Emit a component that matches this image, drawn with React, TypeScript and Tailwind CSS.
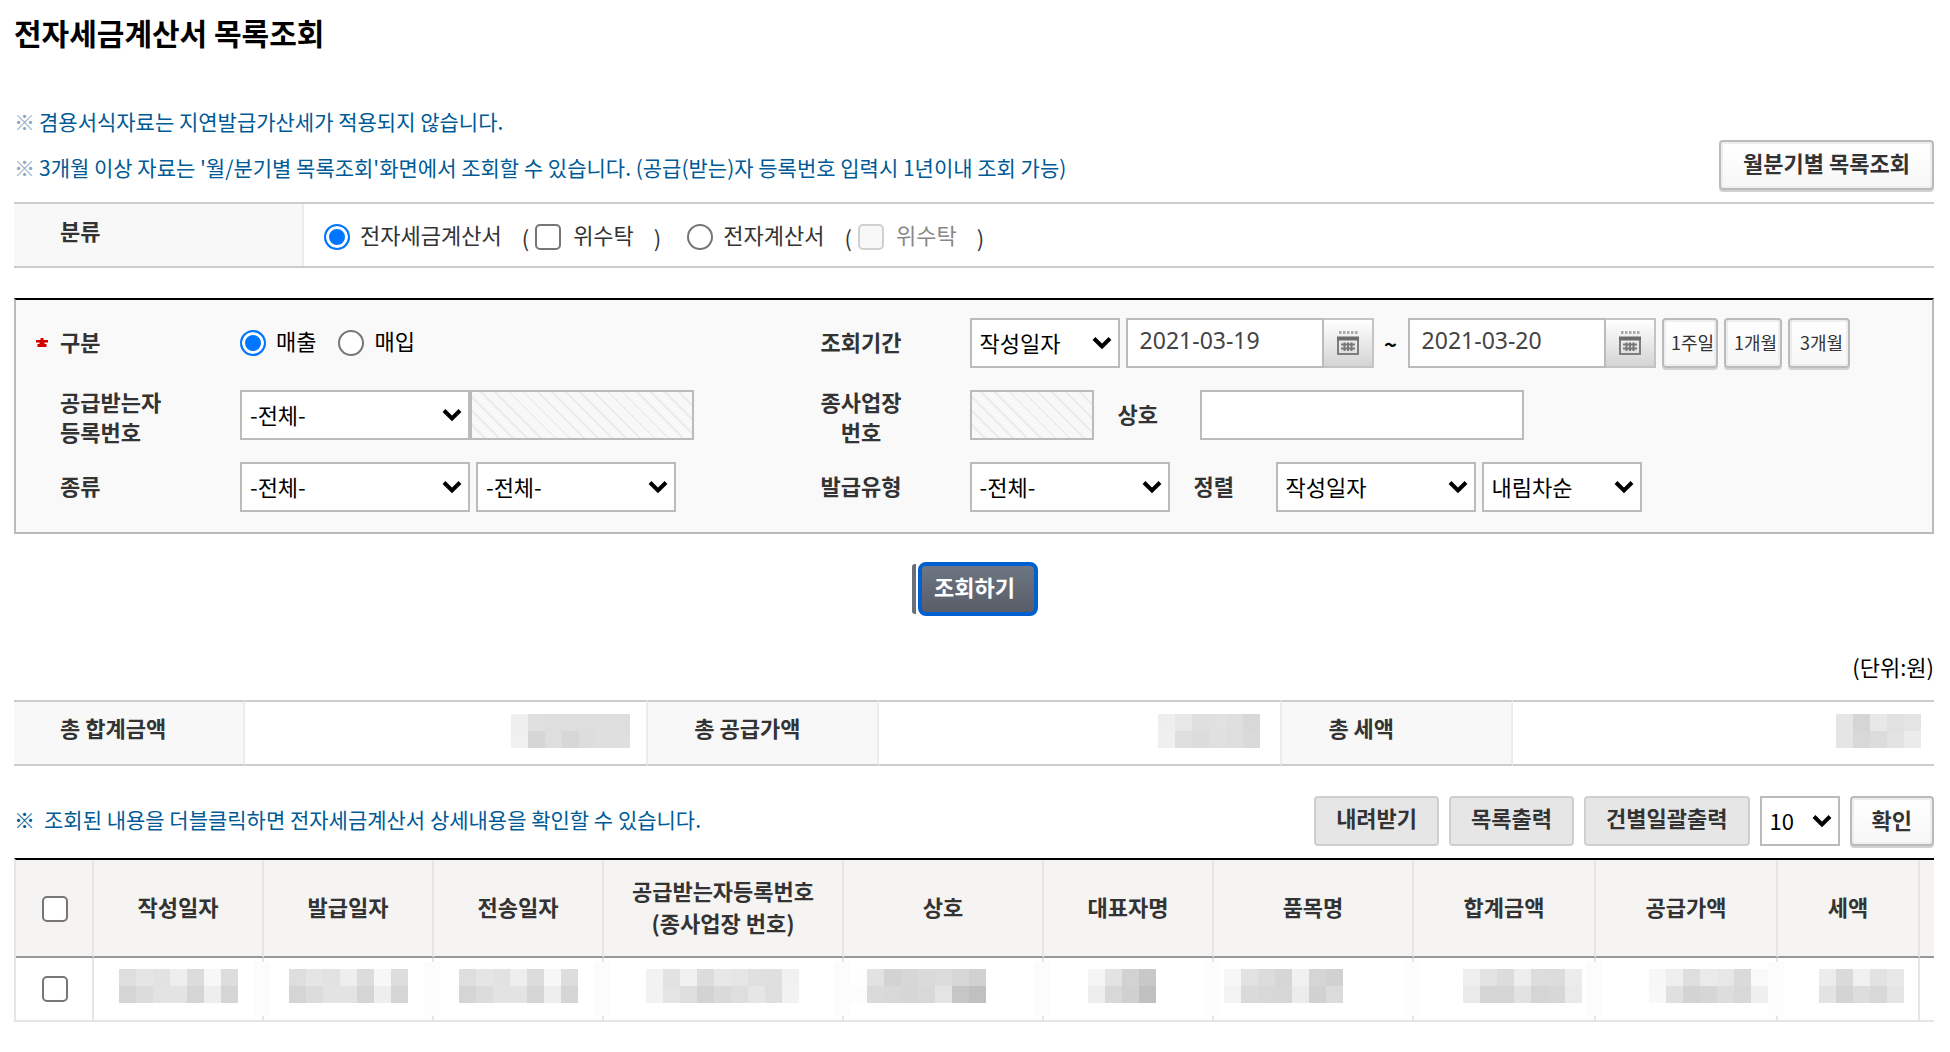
import { useId, type ReactNode } from "react";
import clsx from "clsx";

const RADIO =
  "size-[26px] shrink-0 appearance-none rounded-full border-2 border-[#767676] bg-white checked:border-[#0075ff] checked:bg-[#0075ff] checked:shadow-[inset_0_0_0_3px_#fff]";
const CHECK =
  "size-[26px] shrink-0 appearance-none rounded-[5px] border-2 border-[#767676] bg-white align-middle checked:bg-[#0075ff] disabled:border-[#d0d0d0] disabled:bg-[#f8f8f8]";
const FIELD = "h-[50px] border-2 border-[#bbb] bg-white";
const DISABLED_FIELD =
  "h-[50px] border-2 border-[#bbb] bg-[repeating-linear-gradient(45deg,#f8f8f8_0px,#f8f8f8_8px,#ececec_8px,#ececec_10px)]";
const WHITE_BUTTON =
  "h-[50px] rounded-[4px] border-2 border-[#bbb] bg-linear-to-b from-white to-[#f7f7f7] text-[#333] shadow-[inset_0_0_0_2px_#eee,0_2px_0_#d2d2d2]";
const GRAY_BUTTON =
  "h-[50px] rounded-[4px] border-2 border-[#cfcfcf] bg-[#e6e6e6] px-5 pb-2 font-bold text-[#333]";
const FORM_LABEL = "pb-1 font-bold";

function Select({ label, options, className }: { label: string; options: string[]; className: string }) {
  return (
    <div className={clsx("relative shrink-0", className)}>
      <select
        aria-label={label}
        className="h-[50px] w-full appearance-none border-2 border-[#bbb] bg-white pb-[3px] pl-2 text-black"
      >
        {options.map((o) => (
          <option key={o}>{o}</option>
        ))}
      </select>
      <svg
        viewBox="0 0 20 14"
        className="pointer-events-none absolute top-[18px] right-2 h-[14px] w-5"
        fill="none"
        stroke="#000"
        strokeWidth="4"
      >
        <path d="M2 2.5 10 10.5 18 2.5" />
      </svg>
    </div>
  );
}

function DateField({ label, value }: { label: string; value: string }) {
  return (
    <div className="flex shrink-0">
      <input
        aria-label={label}
        defaultValue={value}
        className={clsx(FIELD, "w-[198px] pb-[6px] pl-3 font-['Noto_Sans'] text-[23px] text-[#444]")}
      />
      <button
        type="button"
        aria-label={label + " 달력"}
        className="flex h-[50px] w-[50px] items-center justify-center border-2 border-l-0 border-[#c4c4c4] bg-linear-to-b from-white to-[#d4d4d4]"
      >
        <svg viewBox="0 0 24 24" className="size-6" fill="none">
          <path d="M3 1.5H22" stroke="#aaa" strokeWidth="3" strokeDasharray="2.5 1.5" />
          <rect x="2" y="7" width="20" height="16" stroke="#7d7d7d" strokeWidth="2" />
          <path d="M1 7.5H23" stroke="#6c6c6c" strokeWidth="4" />
          <path d="M5 13.5H19M5 17.5H19M8.5 11.5V20M12 11.5V20M15.5 11.5V20" stroke="#777" strokeWidth="2" />
        </svg>
      </button>
    </div>
  );
}

function Choice({
  type,
  name,
  children,
  checked,
  disabled,
}: {
  type: "radio" | "checkbox";
  name?: string;
  children: ReactNode;
  checked?: boolean;
  disabled?: boolean;
}) {
  const id = useId();
  return (
    <span className={clsx("flex items-center", type === "radio" ? "gap-[10px]" : "gap-3")}>
      <input
        id={id}
        type={type}
        name={name}
        defaultChecked={checked}
        disabled={disabled}
        className={type === "radio" ? RADIO : CHECK}
      />
      <label htmlFor={id} className={clsx("pb-[7px]", disabled && "text-[#888]")}>
        {children}
      </label>
    </span>
  );
}

/* Masked values: one two-digit gray level per tile, two rows of tiles. */
function Mask({ rows }: { rows: string[] }) {
  return (
    <span className="inline-block align-middle" role="img" aria-label="비공개">
      {rows.map((row, r) => (
        <span key={r} className="flex h-[17px]">
          {row.split(" ").map((g, i) => (
            <span key={i} className="size-[17px]" style={{ backgroundColor: "#" + g + g + g }} />
          ))}
        </span>
      ))}
    </span>
  );
}

const DATE_MASK = ["de e5 e2 ee dc f7 dd", "d5 dc e3 e3 d5 ee d5"];

const COLUMNS: { title: ReactNode; width: string; pad: string; mask: string[] }[] = [
  { title: "작성일자", width: "w-[170px]", pad: "text-center", mask: DATE_MASK },
  { title: "발급일자", width: "w-[170px]", pad: "text-center", mask: DATE_MASK },
  { title: "전송일자", width: "w-[170px]", pad: "text-center", mask: DATE_MASK },
  {
    title: (
      <>
        공급받는자등록번호
        <br />
        (종사업장 번호)
      </>
    ),
    width: "w-[240px]",
    pad: "pr-[2px] text-center",
    mask: ["f2 e2 f1 dc e8 e6 e0 df f1", "f2 e4 de d3 da de e6 de f2"],
  },
  {
    title: "상호",
    width: "w-[200px]",
    pad: "pl-[6px] text-left",
    mask: ["fe e2 d3 d7 da dc d7 d1", "fc da d8 d6 d8 e4 c6 c0"],
  },
  { title: "대표자명", width: "w-[170px]", pad: "pr-3 text-center", mask: ["f5 e3 d2 c8", "ee d8 d0 c0"] },
  {
    title: "품목명",
    width: "w-[200px]",
    pad: "pl-[10px] text-left",
    mask: ["f7 e2 dc d6 f1 d5 d1", "f3 da d8 d7 ec d1 db"],
  },
  {
    title: "합계금액",
    width: "w-[182px]",
    pad: "pr-3 text-right",
    mask: ["ef e3 dc ee dd dc ec", "ea d5 d5 e2 d5 d7 ea"],
  },
  {
    title: "공급가액",
    width: "w-[182px]",
    pad: "pr-2 text-right",
    mask: ["f7 ef de ea e7 da f9", "f8 e0 d3 d6 dd d8 ef"],
  },
  {
    title: "세액",
    width: "w-[142px]",
    pad: "pr-[14px] text-right",
    mask: ["ec da f0 e2 e8", "e3 d4 dd d8 e5"],
  },
];

const TOTALS = [
  {
    title: "총 합계금액",
    cell: "w-[21%] border-r-2 border-r-[#ebebeb] pr-4",
    mask: ["ef e0 de de de de de", "f0 d6 de d7 dd df df"],
  },
  {
    title: "총 공급가액",
    cell: "w-[21%] border-r-2 border-r-[#ebebeb] pr-5",
    mask: ["ee e7 df e1 df d8", "ef de dc e0 de da"],
  },
  { title: "총 세액", cell: "pr-[13px]", mask: ["e5 d5 e8 e1 e4", "e5 d8 dc e3 eb"] },
];

export default function App() {
  return (
    <main className="bg-white pt-3 pr-4 pb-[30px] pl-[14px] font-['Noto_Sans_CJK_KR',sans-serif] text-[22px] leading-8 text-[#333]">
      <h1 className="text-[30px] leading-10 font-bold text-black">전자세금계산서 목록조회</h1>

      <section className="mt-[46px] flex items-end justify-between">
        <div className="pb-[2px] text-[21px] leading-[46px] text-[#005a96]">
          <p className="flex gap-1">
            <span className="text-[#8fa6c2]">※</span>
            겸용서식자료는 지연발급가산세가 적용되지 않습니다.
          </p>
          <p className="flex gap-1">
            <span className="text-[#8fa6c2]">※</span>
            3개월 이상 자료는 '월/분기별 목록조회'화면에서 조회할 수 있습니다. (공급(받는)자 등록번호 입력시 1년이내
            조회 가능)
          </p>
        </div>
        <button type="button" className={clsx(WHITE_BUTTON, "mb-[2px] px-[22px] pb-[7px] font-bold")}>
          월분기별 목록조회
        </button>
      </section>

      <section className="mt-[10px] flex h-[66px] border-y-2 border-[#ccc]">
        <h2 className="w-[290px] shrink-0 border-r-2 border-[#ebebeb] bg-[#f8f8f8] pt-[10px] pl-[46px] font-bold">
          분류
        </h2>
        <div className="flex items-center pt-1 pl-5">
          <Choice type="radio" name="doc" checked>
            전자세금계산서
          </Choice>
          <span className="mr-[6px] ml-5">(</span>
          <Choice type="checkbox">위수탁</Choice>
          <span className="mr-[26px] ml-5">)</span>
          <Choice type="radio" name="doc">
            전자계산서
          </Choice>
          <span className="mr-[6px] ml-5">(</span>
          <Choice type="checkbox" disabled>
            위수탁
          </Choice>
          <span className="ml-5">)</span>
        </div>
      </section>

      <form
        className="mt-[30px] border-2 border-[#bbb] border-t-black bg-[#f9f9f9] pt-[18px] pb-5"
        onSubmit={(e) => e.preventDefault()}
      >
        <div className="grid auto-rows-[50px] grid-cols-[44px_180px_581fr_149px_963fr] items-center gap-y-[22px]">
          <svg viewBox="0 0 12 9" className="mb-[2px] ml-5 h-[9px] w-3" role="img" aria-label="필수">
            <path d="M4.5 0H7.5V2H12V4.5H8.5V6H10.5V9H1.5V6H3.5V4.5H0V2H4.5Z" fill="#d40000" />
          </svg>
          <span className={FORM_LABEL}>구분</span>
          <div className="flex gap-[22px] text-black">
            <Choice type="radio" name="kind" checked>
              매출
            </Choice>
            <Choice type="radio" name="kind">
              매입
            </Choice>
          </div>
          <span className={FORM_LABEL}>조회기간</span>
          <div className="flex items-center">
            <Select label="조회기간 기준" options={["작성일자", "발급일자"]} className="mr-[6px] w-[150px]" />
            <DateField label="시작일" value="2021-03-19" />
            <span className="w-[34px] shrink-0 text-center font-bold text-black">~</span>
            <DateField label="종료일" value="2021-03-20" />
            <div className="ml-[6px] flex shrink-0 gap-[6px] text-[18px]">
              <button type="button" className={clsx(WHITE_BUTTON, "w-[56px] pb-[3px] pl-[6px]")}>
                1주일
              </button>
              <button type="button" className={clsx(WHITE_BUTTON, "w-[58px] pb-[3px] pl-[6px]")}>
                1개월
              </button>
              <button type="button" className={clsx(WHITE_BUTTON, "w-[62px] pb-[3px] pl-[6px]")}>
                3개월
              </button>
            </div>
          </div>

          <span />
          <label htmlFor="regno" className="pt-[2px] leading-[30px] font-bold">
            공급받는자
            <br />
            등록번호
          </label>
          <div className="flex">
            <Select label="등록번호 선택" options={["-전체-"]} className="w-[230px]" />
            <input id="regno" disabled className={clsx(DISABLED_FIELD, "w-[224px]")} />
          </div>
          <label htmlFor="branch" className="justify-self-start pt-[2px] text-center leading-[30px] font-bold">
            종사업장
            <br />
            번호
          </label>
          <div className="flex items-center">
            <input id="branch" disabled className={clsx(DISABLED_FIELD, "w-[124px]")} />
            <label htmlFor="company" className={clsx(FORM_LABEL, "w-[106px] pl-6")}>
              상호
            </label>
            <input id="company" className={clsx(FIELD, "w-[324px] px-3")} />
          </div>

          <span />
          <span className={FORM_LABEL}>종류</span>
          <div className="flex gap-[6px]">
            <Select label="종류" options={["-전체-"]} className="w-[230px]" />
            <Select label="세부 종류" options={["-전체-"]} className="w-[200px]" />
          </div>
          <span className={FORM_LABEL}>발급유형</span>
          <div className="flex items-center">
            <Select label="발급유형" options={["-전체-"]} className="w-[200px]" />
            <span className={clsx(FORM_LABEL, "w-[106px] pl-6")}>정렬</span>
            <Select label="정렬 기준" options={["작성일자", "발급일자"]} className="mr-[6px] w-[200px]" />
            <Select label="정렬 순서" options={["내림차순", "오름차순"]} className="w-[160px]" />
          </div>
        </div>
      </form>

      <div className="mt-7 flex items-center justify-center gap-[2px] pl-[2px]">
        <span className="h-[50px] w-1 rounded-l-[3px] bg-[#6a6f7a]" />
        <button
          type="button"
          className="h-[54px] rounded-[8px] border-4 border-[#0060d2] bg-linear-to-b from-[#6d7682] to-[#595d68] pr-[19px] pb-[7px] pl-3 font-bold text-white"
        >
          조회하기
        </button>
      </div>

      <p className="mt-[34px] text-right text-black">(단위:원)</p>

      <table className="mt-[18px] w-full table-fixed border-separate border-spacing-0">
        <tbody>
          <tr className="h-[66px]">
            {TOTALS.map((t, i) => [
              <th
                key={"h" + i}
                scope="row"
                className="w-[231px] border-y-2 border-r-2 border-y-[#ccc] border-r-[#ebebeb] bg-[#f8f8f8] pb-3 pl-[46px] text-left"
              >
                {t.title}
              </th>,
              <td key={"v" + i} className={clsx("border-y-2 border-y-[#ccc] pb-1 text-right leading-none", t.cell)}>
                <Mask rows={t.mask} />
              </td>,
            ])}
          </tr>
        </tbody>
      </table>

      <div className="mt-[30px] flex items-center justify-between">
        <p className="flex gap-[9px] pb-1 text-[21px] text-[#005a96]">
          <span className="font-bold">※</span>
          조회된 내용을 더블클릭하면 전자세금계산서 상세내용을 확인할 수 있습니다.
        </p>
        <div className="flex gap-[10px]">
          <button type="button" className={GRAY_BUTTON}>
            내려받기
          </button>
          <button type="button" className={GRAY_BUTTON}>
            목록출력
          </button>
          <button type="button" className={GRAY_BUTTON}>
            건별일괄출력
          </button>
          <Select label="페이지당 건수" options={["10", "20", "50"]} className="w-20" />
          <button type="button" className={clsx(WHITE_BUTTON, "px-5 pb-1 font-bold")}>
            확인
          </button>
        </div>
      </div>

      <table className="mt-3 w-full table-fixed border-separate border-spacing-0 border-t-2 border-l-2 border-t-black border-l-[#e6e6e6]">
        <thead>
          <tr className="h-[98px] bg-[#f5f4f2]">
            <th className="w-[78px] border-r-2 border-b-2 border-r-[#e6e6e6] border-b-[#999] p-0 pl-[2px] leading-none">
              <input type="checkbox" aria-label="전체 선택" className={CHECK} />
            </th>
            {COLUMNS.map((c, i) => (
              <th
                key={i}
                scope="col"
                className={clsx(c.width, "border-r-2 border-b-2 border-r-[#e6e6e6] border-b-[#999] p-0 pb-[5px]")}
              >
                {c.title}
              </th>
            ))}
            <th className="border-b-2 border-[#999] p-0" />
          </tr>
        </thead>
        <tbody>
          <tr className="h-[64px]">
            <td className="border-r-2 border-b-2 border-[#e6e6e6] p-0 pb-[2px] pl-[2px] text-center leading-none">
              <input type="checkbox" aria-label="행 선택" className={CHECK} />
            </td>
            {COLUMNS.map((c, i) => (
              <td
                key={i}
                className={clsx("relative border-r-2 border-b-2 border-[#e6e6e6] p-0 pb-[6px] leading-none", c.pad)}
              >
                <Mask rows={c.mask} />
                {i < COLUMNS.length - 1 && <span className="absolute top-1 -right-2 h-[54px] w-4 bg-[#fcfcfc]" />}
              </td>
            ))}
            <td className="border-b-2 border-[#e6e6e6] p-0" />
          </tr>
        </tbody>
      </table>
    </main>
  );
}
